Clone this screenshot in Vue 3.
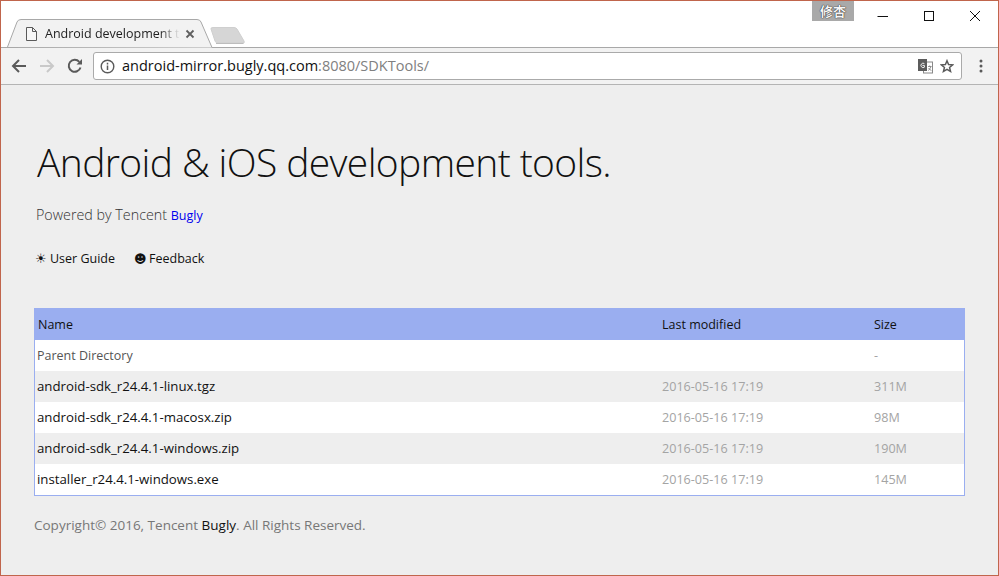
<script setup>
const rows = [
  { name: 'Parent Directory', date: '', size: '-', parent: true },
  { name: 'android-sdk_r24.4.1-linux.tgz', date: '2016-05-16 17:19', size: '311M' },
  { name: 'android-sdk_r24.4.1-macosx.zip', date: '2016-05-16 17:19', size: '98M' },
  { name: 'android-sdk_r24.4.1-windows.zip', date: '2016-05-16 17:19', size: '190M' },
  { name: 'installer_r24.4.1-windows.exe', date: '2016-05-16 17:19', size: '145M' }
]
</script>

<template>
  <div class="window">
    <header class="strip">
      <div class="tab">
        <svg class="tab-shape" width="208" height="29" viewBox="0 0 208 29">
          <path d="M0.5 28 L10 3 Q11 0.5 14 0.5 L190 0.5 Q193 0.5 194 3 L205 28.5 L208 28.5" fill="#f2f2f2" stroke="#a8a8a8" />
        </svg>
        <svg class="tab-file" width="11" height="14" viewBox="0 0 11 14">
          <path d="M0.5 0.5H6.5L10.5 4.5V13.5H0.5Z M6.5 0.5V4.5H10.5" fill="#f7f7f7" stroke="#5a5a5a" />
        </svg>
        <span class="tab-title">Android development t</span>
        <svg class="tab-close" width="10" height="10" viewBox="0 0 10 10">
          <path d="M1.5 1.5L8.5 8.5M8.5 1.5L1.5 8.5" stroke="#5f5f5f" stroke-width="1.8" />
        </svg>
      </div>
      <svg class="new-tab" width="36" height="19" viewBox="0 0 36 19">
        <path d="M3 1.5H24Q26 1.5 27 3L34 15Q35 17 33 17H7Q6 17 5 15L1 3Q0.5 1.5 3 1.5Z" fill="#d6d6d6" stroke="#cfcfcf" />
        <path d="M6 17.5H33.5" stroke="#bdbdbd" />
      </svg>
      <div class="badge">修杏</div>
      <div class="controls">
        <svg width="46" height="30" viewBox="0 0 46 30"><path d="M17.5 15.5H28" stroke="#111" /></svg>
        <svg width="46" height="30" viewBox="0 0 46 30"><rect x="18.5" y="10.5" width="9" height="9" fill="none" stroke="#111" /></svg>
        <svg width="46" height="30" viewBox="0 0 46 30"><path d="M18 10L28 20M28 10L18 20" stroke="#111" /></svg>
      </div>
    </header>

    <nav class="toolbar">
      <svg class="nav" width="16" height="16" viewBox="0 0 16 16">
        <path d="M15 8H2.5M8 2L2 8L8 14" fill="none" stroke="#5a5a5a" stroke-width="2" />
      </svg>
      <svg class="nav" width="16" height="16" viewBox="0 0 16 16">
        <path d="M1 8H13.5M8 2L14 8L8 14" fill="none" stroke="#c9c9c9" stroke-width="2" />
      </svg>
      <svg class="nav" width="16" height="16" viewBox="0 0 16 16">
        <path d="M13.5 9.5A6 6 0 1 1 12.3 3.8" fill="none" stroke="#5a5a5a" stroke-width="2" />
        <path d="M9.5 6.5H15V1Z" fill="#5a5a5a" />
      </svg>
      <div class="omnibox">
        <svg width="15" height="15" viewBox="0 0 15 15">
          <circle cx="7.5" cy="7.5" r="6.3" fill="none" stroke="#5a5a5a" stroke-width="1.4" />
          <path d="M7.5 6.5V11M7.5 3.8V5.4" stroke="#5a5a5a" stroke-width="1.5" />
        </svg>
        <span class="url"><span class="host">android-mirror.bugly.qq.com</span>:8080/SDKTools/</span>
        <svg class="translate" width="15" height="15" viewBox="0 0 15 15">
          <rect x="5.5" y="3" width="9" height="11" fill="#fff" stroke="#888" />
          <rect x="0" y="0" width="9" height="12" fill="#5c5c5c" />
          <path d="M6.4 4.6A2.2 2.2 0 1 0 6.4 8.2V6.4H4.4" fill="none" stroke="#eee" />
          <path d="M10 7.5H13.5M11.7 6.5V7.5M13 7.5Q12.4 10 10.2 11.5M10.6 9Q11.4 10.6 13.4 11.5" fill="none" stroke="#777" stroke-width="0.8" />
        </svg>
        <svg width="14" height="14" viewBox="0 0 17 16">
          <path d="M8.5 1.6L10.4 6.2L15.4 6.6L11.6 9.8L12.8 14.6L8.5 12L4.2 14.6L5.4 9.8L1.6 6.6L6.6 6.2Z" fill="none" stroke="#5a5a5a" stroke-width="1.8" />
        </svg>
      </div>
      <svg class="menu" width="4" height="14" viewBox="0 0 4 14">
        <circle cx="2" cy="2" r="1.5" fill="#5a5a5a" /><circle cx="2" cy="7" r="1.5" fill="#5a5a5a" /><circle cx="2" cy="12" r="1.5" fill="#5a5a5a" />
      </svg>
    </nav>

    <main class="page">
      <h1>Android &amp; iOS development tools.</h1>
      <p class="powered">Powered by Tencent <a class="blue">Bugly</a></p>
      <div class="links">
        <span class="link"><span class="sun">☀</span>User Guide</span>
        <span class="link"><span class="smile">☻</span>Feedback</span>
      </div>
      <table>
        <thead>
          <tr>
            <th class="c1">Name</th>
            <th class="c2">Last modified</th>
            <th class="c3">Size</th>
          </tr>
        </thead>
        <tbody>
          <tr v-for="r in rows" :key="r.name">
            <td :class="r.parent ? 'parent' : 'file'">{{ r.name }}</td>
            <td class="muted">{{ r.date }}</td>
            <td class="muted">{{ r.size }}</td>
          </tr>
        </tbody>
      </table>
      <p class="copy">Copyright© 2016, Tencent <span class="dark">Bugly</span>. All Rights Reserved.</p>
    </main>
  </div>
</template>

<style>
html, body { margin: 0; padding: 0; }
</style>

<style scoped>
.window {
  width: 999px;
  height: 576px;
  box-sizing: border-box;
  border: 1px solid #c0654c;
  background: #eee;
  overflow: hidden;
  font-family: "Open Sans", "Noto Sans", sans-serif;
}
.strip {
  position: relative;
  height: 47px;
  background: #fff;
  box-sizing: border-box;
  border-bottom: 1px solid #a8a8a8;
}
.tab { position: absolute; left: 6px; top: 18px; width: 208px; height: 29px; }
.tab-shape { position: absolute; left: 0; top: 0; }
.tab-file { position: absolute; left: 19px; top: 8px; }
.tab-title {
  position: absolute; left: 38px; top: 6px; height: 18px; white-space: nowrap;
  font: 12.5px/18px "Open Sans", sans-serif; color: #222;
  -webkit-mask-image: linear-gradient(to right, #000 85%, transparent);
  mask-image: linear-gradient(to right, #000 85%, transparent);
}
.tab-close { position: absolute; left: 178px; top: 10px; }
.new-tab { position: absolute; left: 209px; top: 25px; }
.badge {
  position: absolute; left: 811px; top: 0; width: 42px; height: 20px;
  background: #a9a9a9; color: #f6f6f6; text-align: center;
  font: 700 13px/20px "Noto Sans CJK SC", sans-serif;
  text-shadow: 0 0 1px #222, 0 0 1px #222;
}
.controls { position: absolute; right: 0; top: 0; display: flex; }
.toolbar {
  height: 37px;
  box-sizing: border-box;
  background: #f2f2f2;
  border-bottom: 1px solid #b4b4b4;
  display: flex;
  align-items: center;
  padding: 0 15px 0 10px;
}
.nav { margin-right: 12px; flex: none; }
.omnibox {
  flex: 1;
  height: 28px;
  margin: 0 17px 0 -2px;
  box-sizing: border-box;
  background: #fff;
  border: 1px solid #aaa;
  border-radius: 3px;
  display: flex;
  align-items: center;
  padding: 0 7px 0 6px;
}
.url { flex: 1; margin-left: 7px; font: 14.5px/20px "Open Sans", sans-serif; color: #808080; white-space: nowrap; }
.host { color: #111; }
.translate { margin-right: 7px; }
.page { padding: 0 33px; }
h1 {
  margin: 0;
  padding: 50px 0 0 3px;
  font: 300 39px/54px "Open Sans", sans-serif;
  letter-spacing: -0.62px;
  color: #111;
}
.powered { margin: 16px 0 0 2px; font: 300 14.3px/20px "Open Sans", sans-serif; color: #333; }
.blue { color: #0000ee; font-size: 12.5px; font-weight: 400; }
.links { margin: 24px 0 0 2px; display: flex; gap: 19px; font-size: 12.5px; line-height: 18px; color: #111; }
.link { display: flex; align-items: center; }
.sun { width: 14px; margin-left: -1px; margin-right: 1px; font: 13px/18px "DejaVu Sans", sans-serif; }
.smile { width: 15px; font: 12px/18px "DejaVu Sans", sans-serif; }
table {
  width: 931px;
  margin-top: 40px;
  border-collapse: separate;
  border-spacing: 0;
  table-layout: fixed;
  border: 1px solid #9aaef0;
  border-top: 0;
  background: #fff;
  font-size: 12.5px;
}
thead tr { background: #9aaef0; height: 32px; }
th { font-weight: 400; text-align: left; color: #111; padding: 0 0 0 2px; }
th.c1 { width: 623px; padding-left: 3px; box-sizing: border-box; width: 625px; }
.c2 { width: 210px; }
td { height: 31px; padding: 0 0 0 2px; color: #111; box-sizing: border-box; }
tbody tr:nth-child(even) { background: #eee; }
.parent { color: #555; }
.file { font-size: 13.24px; padding-bottom: 2px; }
.muted { color: #a4a4a4; font-size: 12.6px; }
.copy { margin: 20px 0 0; font-size: 13.5px; line-height: 18px; color: #777; }
.dark { color: #111; }
</style>
